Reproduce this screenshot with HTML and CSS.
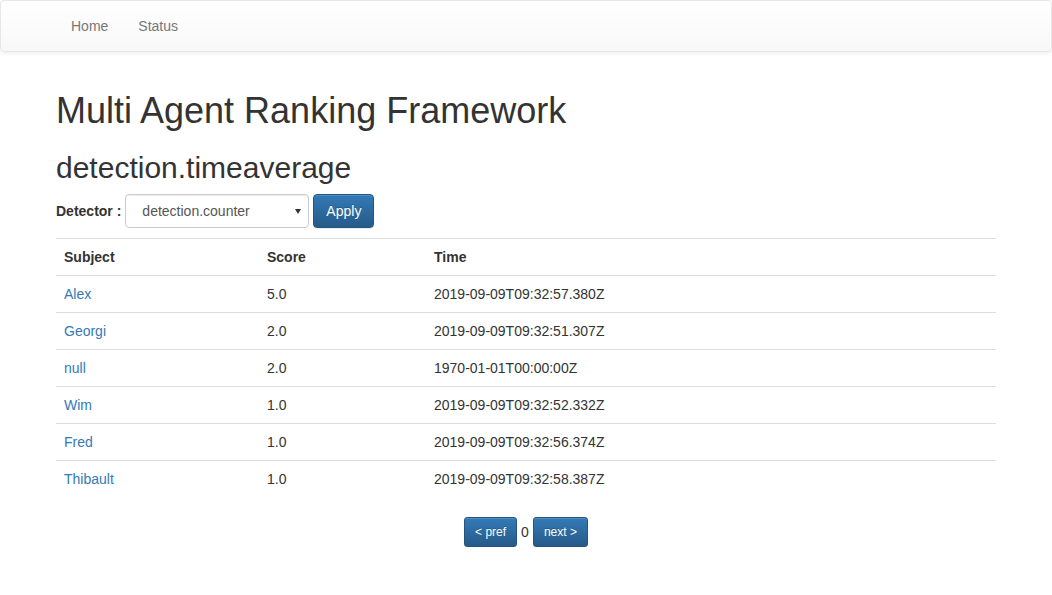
FILE: index.html
```html
<!DOCTYPE html>
<html>
<head>
<meta charset="utf-8">
<title>Multi Agent Ranking Framework</title>
<link rel="stylesheet" href="styles.css">
</head>
<body>
<nav class="navbar">
  <div class="container">
    <ul class="nav">
      <li><a href="#">Home</a></li>
      <li><a href="#">Status</a></li>
    </ul>
  </div>
</nav>
<div class="container main">
  <h1>Multi Agent Ranking Framework</h1>
  <h2>detection.timeaverage</h2>
  <form class="filter">
    <label>Detector :</label>
    <div class="select-wrap">
      <select class="form-control">
        <option>detection.counter</option>
      </select>
      <span class="caret"></span>
    </div>
    <button type="button" class="btn btn-primary">Apply</button>
  </form>
  <table class="table">
    <thead>
      <tr><th class="c1">Subject</th><th class="c2">Score</th><th>Time</th></tr>
    </thead>
    <tbody>
      <tr><td><a href="#">Alex</a></td><td>5.0</td><td>2019-09-09T09:32:57.380Z</td></tr>
      <tr><td><a href="#">Georgi</a></td><td>2.0</td><td>2019-09-09T09:32:51.307Z</td></tr>
      <tr><td><a href="#">null</a></td><td>2.0</td><td>1970-01-01T00:00:00Z</td></tr>
      <tr><td><a href="#">Wim</a></td><td>1.0</td><td>2019-09-09T09:32:52.332Z</td></tr>
      <tr><td><a href="#">Fred</a></td><td>1.0</td><td>2019-09-09T09:32:56.374Z</td></tr>
      <tr><td><a href="#">Thibault</a></td><td>1.0</td><td>2019-09-09T09:32:58.387Z</td></tr>
    </tbody>
  </table>
  <div class="pager">
    <button type="button" class="btn btn-primary btn-sm">&lt; pref</button>
    <span class="page-num">0</span>
    <button type="button" class="btn btn-primary btn-sm">next &gt;</button>
  </div>
</div>
</body>
</html>
```

FILE: styles.css
```css
* { box-sizing: border-box; }
html, body { margin: 0; padding: 0; }
body {
  font-family: "Liberation Sans", Arial, Helvetica, sans-serif;
  font-size: 14px;
  line-height: 1.42857143;
  color: #333;
  background: #fff;
}
a { color: #337ab7; text-decoration: none; }

.container {
  width: 970px;
  margin: 0 auto;
  padding: 0 15px;
}
.main {
  padding-top: 19px;
}

.navbar {
  min-height: 52px;
  margin-bottom: 20px;
  border: 1px solid #e7e7e7;
  border-radius: 4px;
  background-image: linear-gradient(to bottom, #fff 0, #f8f8f8 100%);
  box-shadow: inset 0 1px 0 rgba(255,255,255,.15), 0 1px 5px rgba(0,0,0,.075);
}
.nav {
  list-style: none;
  margin: 0;
  padding: 0;
  display: flex;
}
.nav a {
  display: block;
  padding: 15px;
  line-height: 20px;
  color: #777;
  text-shadow: 0 1px 0 rgba(255,255,255,.25);
}

h1 {
  font-size: 36px;
  font-weight: 500;
  line-height: 1.1;
  margin: 0 0 10px;
}
h2 {
  font-size: 30px;
  font-weight: 500;
  line-height: 1.1;
  margin: 20px 0 10px;
}

.filter {
  display: flex;
  align-items: center;
  gap: 4px;
  margin-bottom: 10px;
}
.filter label {
  font-weight: bold;
}
.select-wrap {
  position: relative;
  width: 184px;
}
.form-control {
  display: block;
  width: 100%;
  height: 34px;
  padding: 6px 12px 6px 16px;
  font-family: inherit;
  font-size: 14px;
  line-height: 1.42857143;
  color: #555;
  background: #fff;
  border: 1px solid #ccc;
  border-radius: 4px;
  box-shadow: inset 0 1px 1px rgba(0,0,0,.075);
  -webkit-appearance: none;
  appearance: none;
}
.caret {
  position: absolute;
  right: 8px;
  top: 15px;
  width: 0;
  height: 0;
  border-left: 3px solid transparent;
  border-right: 3px solid transparent;
  border-top: 5px solid #333;
  pointer-events: none;
}

.btn {
  display: inline-block;
  padding: 6px 12px;
  font-family: inherit;
  font-size: 14px;
  line-height: 1.42857143;
  border: 1px solid transparent;
  border-radius: 4px;
  cursor: pointer;
}
.btn-primary {
  color: #fff;
  background-image: linear-gradient(to bottom, #337ab7 0, #265a88 100%);
  border-color: #245580;
  text-shadow: 0 -1px 0 rgba(0,0,0,.2);
  box-shadow: inset 0 1px 0 rgba(255,255,255,.15), 0 1px 1px rgba(0,0,0,.075);
}
.btn-sm {
  padding: 5px 10px;
  font-size: 12px;
  line-height: 1.5;
  border-radius: 3px;
}

.table {
  width: 100%;
  border-collapse: collapse;
  border-spacing: 0;
  margin-bottom: 20px;
}
.table th, .table td {
  padding: 8px;
  line-height: 20px;
  text-align: left;
  vertical-align: top;
  border-top: 1px solid #ddd;
}
.table th { font-weight: bold; }
.c1 { width: 203px; }
.c2 { width: 167px; }

.pager {
  display: flex;
  justify-content: center;
  align-items: center;
  gap: 4px;
}
.page-num {
  font-size: 14px;
}
```
